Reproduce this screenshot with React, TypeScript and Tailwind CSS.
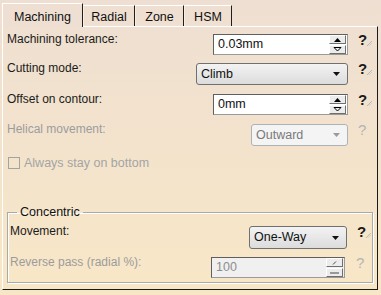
import React from "react";

function Help({ disabled = false, width = "w-[29px]", pad = "pl-[10px]" }: { disabled?: boolean; width?: string; pad?: string }) {
  return (
    <div className={`flex items-start shrink-0 ${width} ${pad}`}>
      <span
        className={`text-[15px] leading-[16px] ${disabled ? "text-[#b4b4b4]" : "text-[#1a1a1a] font-bold"}`}
      >
        ?
      </span>
      {!disabled && (
        <svg width="7" height="7" viewBox="0 0 7 7" className="mt-[8px] -ml-[1px]">
          <path d="M1 6 L6 1" stroke="#b8b8b8" strokeWidth="1" />
          <path d="M3 6 L6 3" stroke="#d0d0d0" strokeWidth="1" />
        </svg>
      )}
    </div>
  );
}

function Arrow({ color = "#111" }: { color?: string }) {
  return (
    <svg width="7" height="4" viewBox="0 0 7 4">
      <path d="M0 0 H7 L3.5 4 Z" fill={color} />
    </svg>
  );
}

function Select({
  value,
  width,
  disabled = false,
  height = "h-[22px]",
}: {
  value: string;
  width: string;
  disabled?: boolean;
  height?: string;
}) {
  return (
    <div
      className={`${width} ${height} rounded-[3px] border flex items-center justify-between pl-[4px] pr-[7px] ${
        disabled
          ? "border-[#adb2b5] bg-[#f4f4f4] text-[#7a7a7a]"
          : "border-[#707070] bg-linear-to-b from-[#f3f3f3] to-[#dcdcdc] text-[#111]"
      }`}
    >
      <span className="text-[12.5px]">{value}</span>
      <Arrow color={disabled ? "#9a9a9a" : "#111"} />
    </div>
  );
}

function Spin({ disabled = false }: { disabled?: boolean }) {
  const btn =
    "w-[17px] h-[9px] border border-t-white border-l-white border-r-[#6f6f6f] border-b-[#6f6f6f] bg-[#ececec] flex items-center justify-center";
  return (
    <div className="flex flex-col gap-px mr-[1px]">
      <div className={btn}>
        {disabled ? (
          <svg width="5" height="4" viewBox="0 0 5 4">
            <path d="M1 3.5 L4 0.5" stroke="#444" />
          </svg>
        ) : (
          <svg width="7" height="4" viewBox="0 0 7 4">
            <path d="M0 4 H7 L3.5 0 Z" fill="#000" />
          </svg>
        )}
      </div>
      <div className={btn}>
        {disabled ? (
          <svg width="9" height="2" viewBox="0 0 9 2">
            <path d="M0 1 H9" stroke="#444" />
          </svg>
        ) : (
          <svg width="9" height="5" viewBox="0 0 9 5">
            <path d="M1 0.5 H8 L4.5 4 Z" fill="none" stroke="#000" />
          </svg>
        )}
      </div>
    </div>
  );
}

function Field({ value, width, disabled = false }: { value: string; width: string; disabled?: boolean }) {
  return (
    <div
      className={`${width} h-[21px] border border-[#9a9a9a] border-t-[#5f5f5f] border-l-[#5f5f5f] flex items-center justify-between pl-[4px] ${
        disabled ? "bg-[#f0f0f0] text-[#8e8e8e]" : "bg-white text-[#111]"
      }`}
    >
      <span className="text-[12.5px]">{value}</span>
      <Spin disabled={disabled} />
    </div>
  );
}

function Row({
  label,
  children,
  height,
  disabled = false,
}: {
  label: string;
  children: React.ReactNode;
  height: string;
  disabled?: boolean;
}) {
  return (
    <div className={`flex items-start ${height}`}>
      <span className={`flex-1 leading-[14px] ${disabled ? "text-[#9c9c9c]" : "text-[#1b1b1b]"}`}>{label}</span>
      <div className="mt-[2px]">{children}</div>
      <Help disabled={disabled} />
    </div>
  );
}

export default function App() {
  const tabs = ["Radial", "Zone", "HSM"];
  const widths = ["w-[52px]", "w-[49px]", "w-[48px]"];

  return (
    <div className="w-[381px] h-[295px] overflow-hidden bg-linear-to-b from-[#eedfd2] to-[#f8e7c6] font-['Liberation_Sans',Arial,sans-serif] text-[12px] pt-[3px] pl-[2px]">
      <div className="flex items-end h-[24px] -mb-px relative z-10">
        <div className="w-[81px] h-[24px] bg-[#eedfd2] border-l border-t border-r border-white border-r-[#1e1e1e] flex items-start justify-center pt-[4px] text-[12.5px] text-[#111]">
          Machining
        </div>
        {tabs.map((t, i) => (
          <div
            key={t}
            className={`${widths[i]} h-[21px] mb-px border-t border-l border-r border-white border-l-[#f7efe6] border-r-[#1e1e1e] flex items-start justify-center pt-[2px] text-[12.5px] text-[#111]`}
          >
            {t}
          </div>
        ))}
      </div>

      <div className="w-[376px] h-[264px] border border-white border-r-[#1a1a1a] border-b-[#1a1a1a] pt-[5px] pl-[4px]">
        <Row label="Machining tolerance:" height="h-[29px]">
          <Field value="0.03mm" width="w-[135px]" />
        </Row>
        <Row label="Cutting mode:" height="h-[31px]">
          <Select value="Climb" width="w-[152px]" />
        </Row>
        <Row label="Offset on contour:" height="h-[30px]">
          <Field value="0mm" width="w-[135px]" />
        </Row>
        <Row label="Helical movement:" height="h-[33px]" disabled>
          <Select value="Outward" width="w-[97px]" disabled />
        </Row>

        <div className="flex items-center gap-[4px] pl-[1px] h-[16px]">
          <div className="w-[12px] h-[12px] border border-[#a3a3a3] bg-transparent" />
          <span className="text-[#a4a4a4] text-[12.5px]">Always stay on bottom</span>
        </div>

        <fieldset className="mt-[34px] w-[366px] h-[78px] border border-[#a9a9a9] shadow-[inset_1px_1px_0_#fff,1px_1px_0_#fff] pl-[2px] pt-[5px]">
          <legend className="ml-[7px] px-[3px] text-[12.5px] leading-[14px] text-[#111]">Concentric</legend>
          <div className="flex items-start h-[31px]">
            <span className="flex-1 leading-[14px] text-[#1b1b1b]">Movement:</span>
            <div className="mt-[2px]">
              <Select value="One-Way" width="w-[98px]" height="h-[23px]" />
            </div>
            <Help width="w-[25px]" pad="pl-[10px]" />
          </div>
          <div className="flex items-start h-[28px]">
            <span className="flex-1 leading-[14px] text-[#9c9c9c]">Reverse pass (radial %):</span>
            <div className="mt-[2px]">
              <Field value="100" width="w-[134px]" disabled />
            </div>
            <Help width="w-[27px]" pad="pl-[11px]" disabled />
          </div>
        </fieldset>
      </div>
    </div>
  );
}
